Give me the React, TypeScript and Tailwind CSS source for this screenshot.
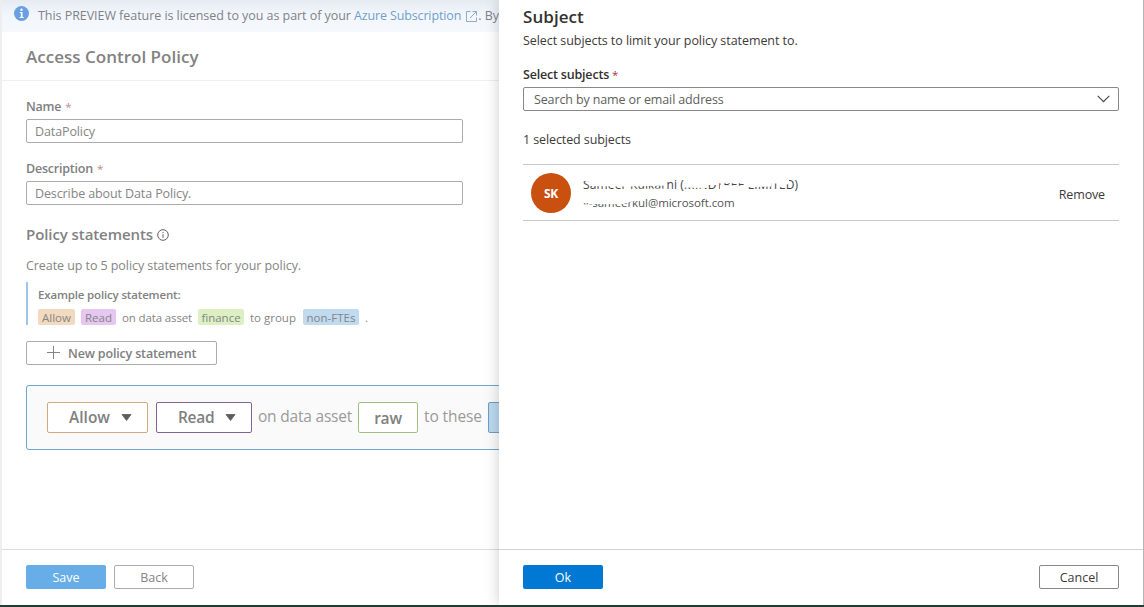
import React from "react";

function Required() {
  return <span className="ml-[4px] text-[11.5px] font-normal text-[#c08a8e]">*</span>;
}

function Caret() {
  return (
    <svg width="11" height="7" viewBox="0 0 10 7" className="ml-[11px] shrink-0">
      <path d="M0.5 0.5h9L5 6.5z" fill="#5c5c5c" stroke="#5c5c5c" strokeWidth="0.8" strokeLinejoin="round" />
    </svg>
  );
}

function Banner() {
  return (
    <div className="flex h-8 shrink-0 items-center bg-linear-to-b from-[#e6ebf2] via-[#f3f7fd] via-50% to-[#f5f9fe] pl-3 text-[12.5px] text-[#7f8286]">
      <svg width="15" height="15" viewBox="0 0 15 15" className="mb-[6px] shrink-0">
        <circle cx="7.5" cy="7.5" r="7.5" fill="#6a9fe4" />
        <circle cx="7.5" cy="3.7" r="1.2" fill="#fff" />
        <path d="M5.8 6h2.7v5h1.2v1H5.6v-1h1.2V7h-1z" fill="#fff" />
      </svg>
      <span className="ml-[9px] tracking-[-0.05px]">This PREVIEW feature is licensed to you as part of your</span>
      <span className="ml-[3px] tracking-[-0.13px] text-[#6f9fca]">Azure Subscription</span>
      <svg width="11" height="11" viewBox="0 0 11 11" className="ml-[5px] shrink-0" fill="none" stroke="#8fabc6" strokeWidth="1">
        <path d="M4.5 0.5h-4v10h10v-4M6.5 0.5h4v4M10.5 0.5L4 7" />
      </svg>
      <span className="ml-[1px]">. By</span>
    </div>
  );
}

function Field({ label, value }: { label: string; value: string }) {
  return (
    <div>
      <div className="flex h-5 items-center pt-[2px] text-[12.5px] font-semibold tracking-[-0.22px] text-[#808080]">
        {label}
        <Required />
      </div>
      <div className="mt-[3px] flex h-6 w-[437px] items-center rounded-[2px] border border-[#acacac] pt-[2px] pl-2 text-[12.5px] tracking-[-0.11px] text-[#858585]">
        {value}
      </div>
    </div>
  );
}

function PolicyPage() {
  return (
    <section className="flex w-[499px] shrink-0 flex-col overflow-hidden border-l-2 border-[#eeeeee] whitespace-nowrap">
      <Banner />
      <header className="flex h-[49px] shrink-0 items-center border-b border-[#eeeeee] pt-[2px] pl-6 text-[17px] font-semibold text-[#828282]">
        <h1 className="tracking-[0.01px]">Access Control Policy</h1>
      </header>
      <main className="flex flex-1 flex-col items-start pt-[15px] pl-6">
        <Field label="Name" value="DataPolicy" />
        <div className="h-[15px]" />
        <Field label="Description" value="Describe about Data Policy." />
        <h2 className="mt-[19px] flex h-5 items-center text-[15px] font-semibold tracking-[-0.08px] text-[#828282]">
          Policy statements
          <svg width="12" height="12" viewBox="0 0 12 12" className="mt-[2px] ml-1" fill="none" stroke="#606060">
            <circle cx="6" cy="6" r="5.3" />
            <path d="M6 5.2v3.6M6 3v1.2" />
          </svg>
        </h2>
        <p className="mt-3 h-5 text-[12.5px] leading-5 tracking-[-0.07px] text-[#858585]">Create up to 5 policy statements for your policy.</p>
        <div className="mt-[6px] flex h-[43px] flex-col border-l-2 border-[#9fc4ea] pl-[10px] text-[11.5px] text-[#858585]">
          <div className="mt-1 h-[18px] leading-[18px] font-semibold tracking-[-0.16px] text-[#828282]">Example policy statement:</div>
          <div className="mt-[5px] flex h-4 items-center">
            <span className="flex h-4 w-[37px] items-center justify-center rounded-[2px] bg-[#f2dac0] pt-px">Allow</span>
            <span className="ml-[6px] flex h-4 w-[35px] items-center justify-center rounded-[2px] bg-[#e5c7f2] pt-px">Read</span>
            <span className="ml-[6px] w-[70px] pt-px tracking-[-0.13px]">on data asset</span>
            <span className="ml-[6px] flex h-4 w-[46px] items-center justify-center rounded-[2px] bg-[#dcf0c4] pt-px">finance</span>
            <span className="ml-[6px] w-[47px] pt-px">to group</span>
            <span className="ml-[6px] flex h-4 w-[56px] items-center justify-center rounded-[2px] bg-[#c0daf0] pt-px">non-FTEs</span>
            <span className="ml-[6px] pt-px">.</span>
          </div>
        </div>
        <button className="mt-4 flex h-6 w-[191px] items-center rounded-[2px] border border-[#acacac] pt-[2px] pl-5 text-[12.5px] font-semibold tracking-[-0.16px] text-[#808080]">
          <svg width="13" height="13" viewBox="0 0 13 13" className="mr-2 mb-[3px] shrink-0" stroke="#858585">
            <path d="M6.5 0v13M0 6.5h13" />
          </svg>
          New policy statement
        </button>
        <div className="mt-5 flex h-[65px] w-[520px] items-center rounded-[3px] border border-[#6ba7cf] bg-[#fafafa] pl-5 text-[15.5px] text-[#9a9a9a]">
          <button className="flex h-[31px] w-[101px] shrink-0 items-center rounded-[2px] border border-[#d0a97c] bg-white pl-[21px] font-semibold text-[#808080]">
            Allow
            <Caret />
          </button>
          <button className="ml-2 flex h-[31px] w-[96px] shrink-0 items-center rounded-[2px] border border-[#7f6494] bg-white pl-[21px] font-semibold tracking-[-0.3px] text-[#808080]">
            Read
            <Caret />
          </button>
          <span className="ml-[6px] w-[94px] shrink-0 pb-px tracking-[-0.2px]">on data asset</span>
          <span className="ml-[6px] flex h-[31px] w-[60px] shrink-0 items-center justify-center rounded-[2px] border border-[#a2bf82] bg-white pt-[2px] font-semibold tracking-[-0.2px] text-[#808080]">
            raw
          </span>
          <span className="ml-[6px] w-[58px] shrink-0 pb-px tracking-[-0.1px]">to these</span>
          <span className="ml-[6px] h-[31px] w-[60px] shrink-0 rounded-[2px] border border-[#6f9cc4] bg-[#bcd9f0]" />
        </div>
      </main>
      <footer className="flex h-[56px] shrink-0 items-start gap-2 border-t border-[#dddddd] pt-[15px] pl-6 text-[12.5px]">
        <button className="h-6 w-20 rounded-[2px] bg-[#67aee8] pt-[2px] font-medium text-white">Save</button>
        <button className="h-6 w-20 rounded-[2px] border border-[#acacac] pt-[2px] text-[#858585]">Back</button>
      </footer>
    </section>
  );
}

function Persona() {
  return (
    <div className="mt-[14px] flex h-[57px] items-center border-y border-[#c8c8c8] pl-2">
      <div className="flex size-10 items-center justify-center rounded-full bg-[#ca5010] pt-[2px] text-[12px] font-bold tracking-[-0.2px] text-white">SK</div>
      <div className="relative ml-3 w-[230px]">
        <div className="h-[18px] pt-px text-[12px] leading-[18px] tracking-[0.15px] text-[#444]">Sameer Kulkarni (MINDTREE LIMITED)</div>
        <div className="h-[18px] pt-px text-[11.5px] leading-[18px] tracking-[-0.06px] text-[#555]">v-sameerkul@microsoft.com</div>
        <svg width="230" height="36" viewBox="0 0 230 36" className="absolute top-0 left-0" fill="#fff">
          <path d="M0 3H7V6H0zM8 3H45V11.5L8 11z" />
          <path d="M45 3H84V10.5L45 11.5zM45 14L80 13.5V18H45z" />
          <path d="M101 3H124V13L101 12.5z" />
          <path d="M122 3H134V10H122z" />
          <path d="M134 3H164V8.3H134zM137 10L164 11V18H137z" />
          <path d="M163 3H188V11.5L163 12z" />
          <path d="M187 3H206V9.5L196 8.5H187zM196 8H203V12H196z" />
          <path d="M0 19H7V28H0zM0 29.5H10V35H0z" />
          <path d="M7 19H40V29L7 29zM40 19L55 19V25L40 29z" />
        </svg>
      </div>
      <button className="mr-[14px] ml-auto pt-[5px] text-[12.5px] tracking-[-0.15px] text-[#3c3a39]">Remove</button>
    </div>
  );
}

function SubjectPanel() {
  return (
    <aside className="relative flex flex-1 flex-col border-r border-[#b5b5b5] bg-white whitespace-nowrap shadow-[0_0_14px_rgba(0,0,0,0.2)]">
      <div className="flex flex-1 flex-col px-6 pt-[5px] text-[12.5px] text-[#3c3a39]">
        <h2 className="h-6 text-[17px] leading-6 font-semibold tracking-[0.05px] text-[#33312f]">Subject</h2>
        <p className="mt-[2px] h-5 leading-5 tracking-[-0.06px]">Select subjects to limit your policy statement to.</p>
        <div className="mt-[13px] flex h-5 items-center pt-[2px] font-semibold tracking-[-0.19px] text-[#33312f]">
          Select subjects
          <span className="ml-[3px] text-[11.5px] font-normal text-[#a4373a]">*</span>
        </div>
        <div className="mt-[3px] flex h-6 items-center justify-between rounded-[2px] border border-[#8a8886] pt-[2px] pr-2 pl-[10px] tracking-[-0.13px] text-[#605e5c]">
          Search by name or email address
          <svg width="13" height="8" viewBox="0 0 13 8" fill="none" stroke="#444" className="mb-[2px]">
            <path d="M0.7 0.9L6.5 6.7L12.3 0.9" strokeWidth="1.1" />
          </svg>
        </div>
        <div className="mt-[19px] h-5 leading-5 tracking-[-0.1px]">1 selected subjects</div>
        <Persona />
      </div>
      <footer className="flex h-[56px] shrink-0 items-start justify-between border-t border-[#d2d2d2] px-6 pt-[15px] text-[12.5px]">
        <button className="h-6 w-20 rounded-[2px] bg-[#0078d4] pt-[2px] font-medium text-white">Ok</button>
        <button className="h-6 w-20 rounded-[2px] border border-[#8a8886] pt-[2px] text-[#3c3a39]">Cancel</button>
      </footer>
    </aside>
  );
}

export default function App() {
  return (
    <div className="flex h-[607px] w-[1144px] flex-col overflow-hidden bg-white font-['Open_Sans','Noto_Sans',sans-serif]">
      <div className="flex min-h-0 flex-1 overflow-hidden">
        <PolicyPage />
        <SubjectPanel />
      </div>
      <div className="h-[2px] shrink-0 bg-[#1f3d33]" />
    </div>
  );
}
